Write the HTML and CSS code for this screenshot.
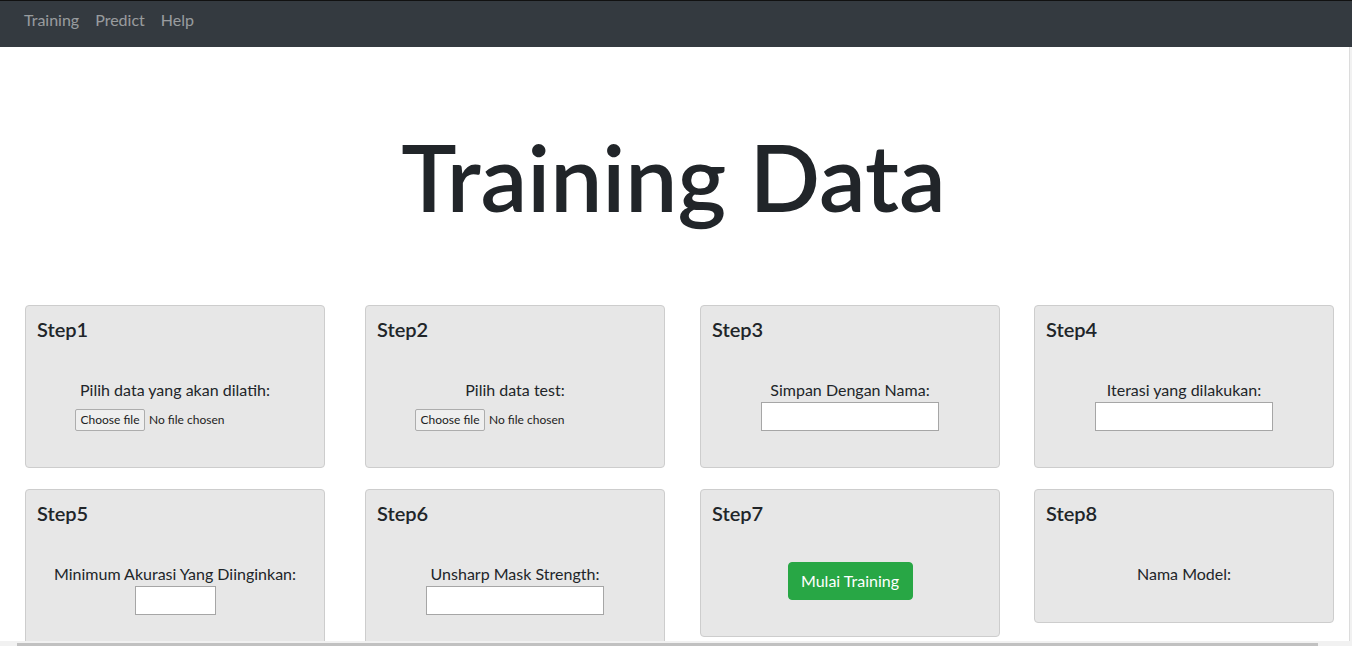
FILE: index.html
```html
<!DOCTYPE html>
<html lang="id">
<head>
<meta charset="utf-8">
<title>Training Data</title>
<link rel="stylesheet" href="styles.css">
</head>
<body>
<nav class="navbar">
  <a class="nav-link" href="#">Training</a>
  <a class="nav-link" href="#">Predict</a>
  <a class="nav-link" href="#">Help</a>
</nav>
<main class="main">
  <h1 class="title">Training Data</h1>
  <section class="steps">
    <div class="card">
      <h5 class="card-title">Step1</h5>
      <div class="card-body">
        <label class="lbl">Pilih data yang akan dilatih:</label>
        <div class="file"><span class="file-btn">Choose file</span><span class="file-name">No file chosen</span></div>
      </div>
    </div>
    <div class="card">
      <h5 class="card-title">Step2</h5>
      <div class="card-body">
        <label class="lbl">Pilih data test:</label>
        <div class="file"><span class="file-btn">Choose file</span><span class="file-name">No file chosen</span></div>
      </div>
    </div>
    <div class="card">
      <h5 class="card-title">Step3</h5>
      <div class="card-body">
        <label class="lbl">Simpan Dengan Nama:</label>
        <input class="txt" type="text">
      </div>
    </div>
    <div class="card">
      <h5 class="card-title">Step4</h5>
      <div class="card-body">
        <label class="lbl">Iterasi yang dilakukan:</label>
        <input class="txt" type="text">
      </div>
    </div>
    <div class="card">
      <h5 class="card-title">Step5</h5>
      <div class="card-body">
        <label class="lbl">Minimum Akurasi Yang Diinginkan:</label>
        <input class="txt txt-small" type="text">
      </div>
    </div>
    <div class="card">
      <h5 class="card-title">Step6</h5>
      <div class="card-body">
        <label class="lbl">Unsharp Mask Strength:</label>
        <input class="txt" type="text">
      </div>
    </div>
    <div class="card">
      <h5 class="card-title">Step7</h5>
      <div class="card-body">
        <button class="btn-success" type="button">Mulai Training</button>
      </div>
    </div>
    <div class="card">
      <h5 class="card-title">Step8</h5>
      <div class="card-body">
        <label class="lbl">Nama Model:</label>
      </div>
    </div>
  </section>
</main>
<div class="vscroll"></div>
<div class="hscroll"><div class="hscroll-thumb"></div></div>
</body>
</html>
```

FILE: styles.css
```css
html, body {
  margin: 0;
  padding: 0;
  height: 100%;
  overflow: hidden;
}
body {
  font-family: "Lato", "Liberation Sans", sans-serif;
  font-size: 16px;
  line-height: 1.5;
  color: #212529;
  background: #fff;
}
.navbar {
  display: flex;
  align-items: center;
  box-sizing: border-box;
  height: 47px;
  border-top: 1px solid #111;
  background: #343a40;
  padding: 0 8px 8px 16px;
}
.nav-link {
  color: rgba(255, 255, 255, 0.5);
  text-decoration: none;
  padding: 0 8px;
  font-size: 16px;
  line-height: 24px;
}
.main {
  width: 1347px;
}
.title {
  margin: 74px 0 0;
  text-align: center;
  font-size: 93px;
  font-weight: 600;
  line-height: 1.2;
  letter-spacing: 0;
}
.steps {
  display: grid;
  grid-template-columns: 340px 335px 334px 300px;
  row-gap: 21px;
  align-items: start;
  padding-left: 25px;
  margin-top: 72px;
}
.card {
  width: 300px;
  box-sizing: border-box;
  background: #e7e7e7;
  border: 1px solid #cdcdcd;
  border-radius: 4px;
  padding: 11px 11px 36px;
}
.card-title {
  margin: 0;
  font-size: 20px;
  font-weight: 600;
  line-height: 24px;
  color: #212529;
}
.card-body {
  margin-top: 37px;
  display: flex;
  flex-direction: column;
  align-items: center;
  text-align: center;
}
.lbl {
  display: block;
  line-height: 24px;
}
.file {
  width: 200px;
  margin-top: 7px;
  display: flex;
  align-items: center;
  font-size: 12px;
  line-height: 20px;
}
.file-btn {
  box-sizing: border-box;
  height: 22px;
  width: 70px;
  border: 1px solid #adadad;
  border-radius: 2px;
  background: #efefef;
  color: #222;
  text-align: center;
  line-height: 20px;
}
.file-name {
  margin-left: 4px;
  color: #222;
}
.txt {
  box-sizing: border-box;
  width: 178px;
  height: 29px;
  margin: 0;
  border: 1px solid #a6a6a6;
  background: #fff;
  padding: 1px 2px;
  font: inherit;
}
.txt-small {
  width: 81px;
}
.btn-success {
  font: inherit;
  line-height: 24px;
  padding: 6px 12px;
  color: #fff;
  background: #28a745;
  border: 1px solid #28a745;
  border-radius: 4px;
  width: 125px;
}
.vscroll {
  position: fixed;
  top: 47px;
  right: 0;
  bottom: 0;
  width: 2px;
  background: #f1f1f1;
  border-left: 1px solid #dcdcdc;
}
.hscroll {
  position: fixed;
  left: 0;
  right: 0;
  bottom: 0;
  height: 5px;
  background: #f1f1f1;
}
.hscroll-thumb {
  position: absolute;
  left: 17px;
  top: 2px;
  bottom: 0;
  width: 1301px;
  background: #c1c1c1;
}
```
